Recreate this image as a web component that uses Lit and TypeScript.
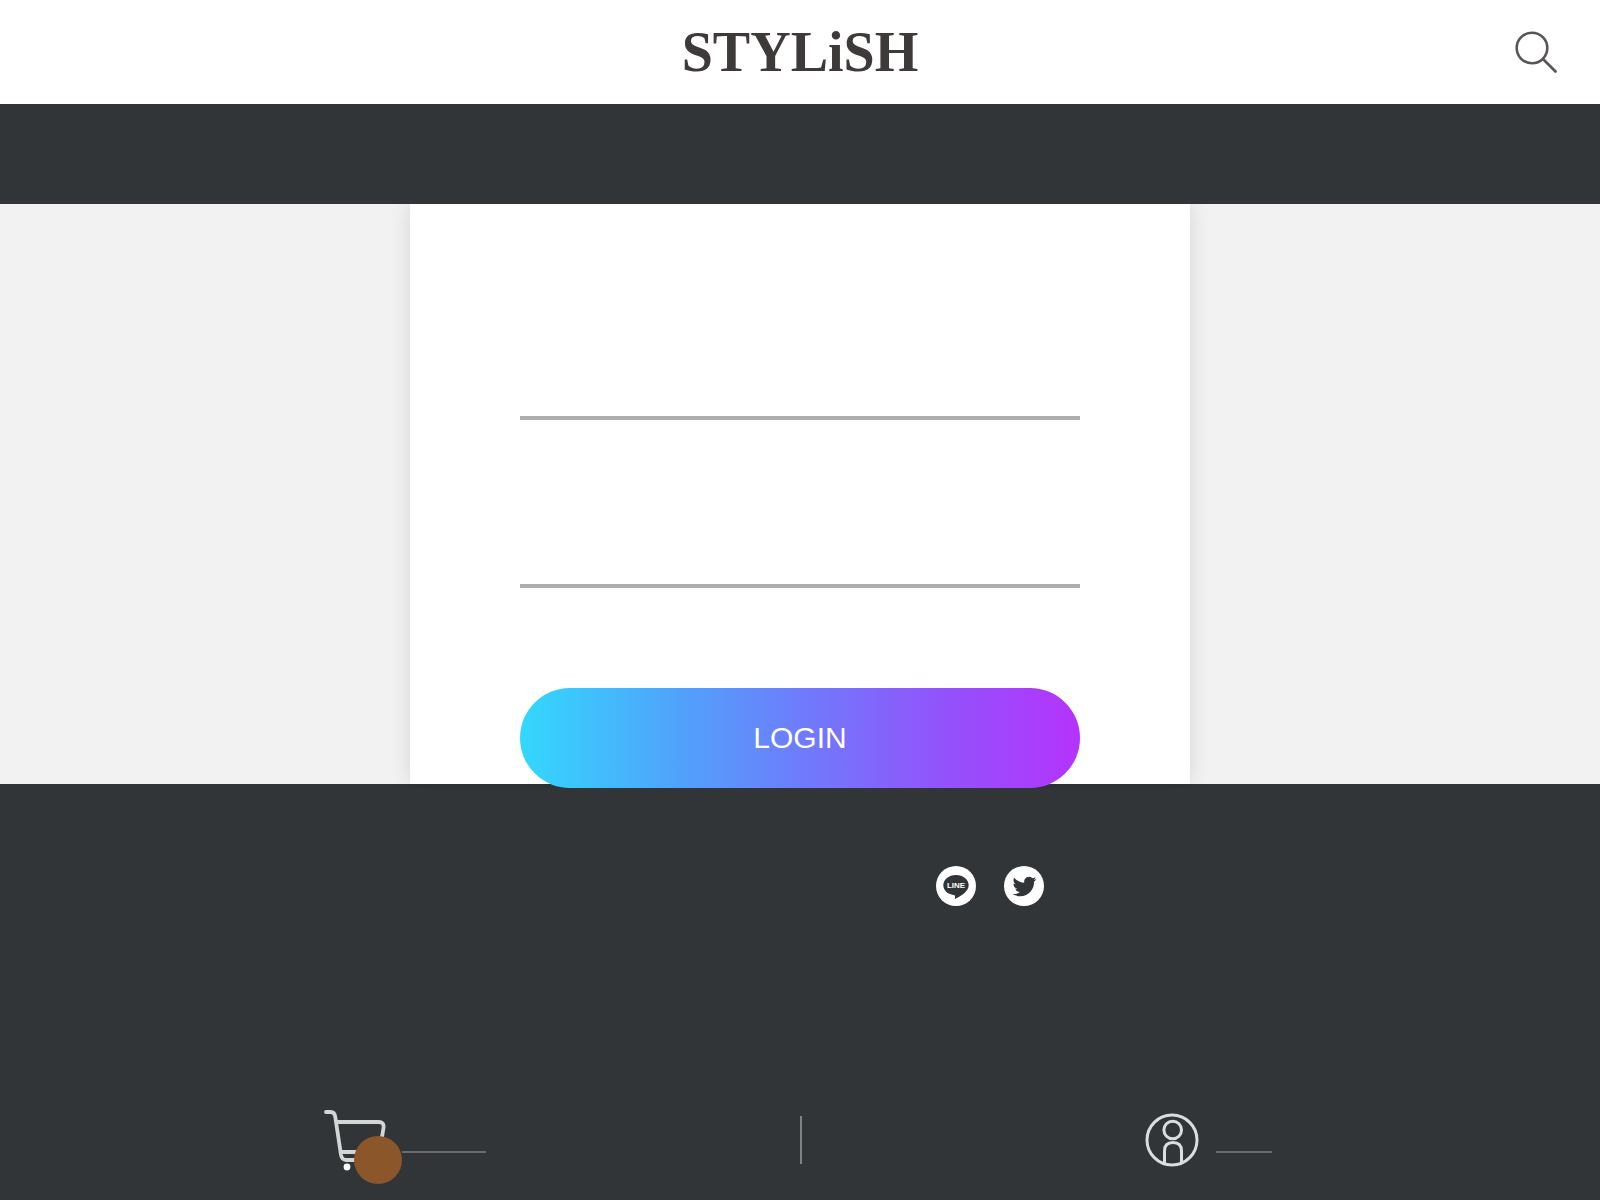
import { LitElement, html, css } from "lit";
import { customElement } from "lit/decorators.js";

@customElement("app-root")
export class AppRoot extends LitElement {
  static styles = css`
    :host {
      display: flex;
      flex-direction: column;
      min-height: 100vh;
      background: #f2f2f2;
      font-family: "Liberation Sans", Arial, sans-serif;
    }
    * {
      box-sizing: border-box;
    }
    svg {
      display: block;
    }
    .header {
      display: grid;
      grid-template-columns: 1fr auto 1fr;
      align-items: center;
      height: 104px;
      padding: 0 40px;
      background: #fff;
    }
    .logo {
      grid-column: 2;
      color: #3f3a3a;
      font-family: "Liberation Serif", "Times New Roman", serif;
      font-size: 56px;
      font-weight: 700;
      line-height: 64px;
      text-decoration: none;
    }
    .search {
      justify-self: end;
      width: 48px;
      height: 48px;
      padding: 0;
      border: 0;
      background: none;
    }
    .band {
      height: 100px;
      background: #313538;
    }
    .main {
      position: relative;
      z-index: 1;
      flex: 1;
      display: flex;
      justify-content: center;
    }
    /* The side shadows stay; the button may hang over the footer. */
    .card {
      display: flex;
      flex-direction: column;
      width: 780px;
      max-width: 100%;
      height: 580px;
      padding: 116px 110px 0;
      background: #fff;
      box-shadow: 0 0 20px rgba(0, 0, 0, 0.12);
      clip-path: inset(0 -60px -4px);
    }
    .field {
      flex: none;
      height: 100px;
      margin-bottom: 68px;
      padding: 0 8px;
      border: 0;
      border-bottom: 4px solid #adadad;
      background: none;
      font: inherit;
      font-size: 30px;
      outline: none;
    }
    .login {
      flex: none;
      height: 100px;
      margin-top: 32px;
      border: 0;
      border-radius: 50px;
      background: linear-gradient(90deg, #33d8fd, #4fa3fb 28%, #6e7cfb 50%, #9352fb 76%, #b533fd);
      color: #fff;
      font: inherit;
      font-size: 30px;
    }
    .footer {
      height: 296px;
      background: #313538;
    }
    .social {
      display: flex;
      justify-content: center;
      gap: 28px;
      padding: 82px 0 0 380px;
    }
    .tabs {
      display: flex;
      align-items: center;
      height: 120px;
      background: #313538;
    }
    .tab {
      display: flex;
      justify-content: center;
      align-items: center;
      width: 50%;
      height: 48px;
    }
    .tab + .tab {
      box-shadow: inset 2px 0 #828282;
    }
    .icon {
      position: relative;
      flex: none;
      width: 88px;
      height: 88px;
    }
    .badge {
      position: absolute;
      right: 0;
      bottom: 0;
      width: 48px;
      height: 48px;
      border-radius: 50%;
      background: #8b572a;
    }
    .underline {
      height: 26px;
      border-bottom: 2px solid #6b6b6b;
    }
    .wide {
      width: 84px;
    }
    .narrow {
      width: 56px;
    }
  `;

  render() {
    return html`
      <header class="header">
        <a class="logo" href="#">STYLiSH</a>
        <button class="search" aria-label="Search">
          <svg width="48" height="48" viewBox="0 0 48 48" fill="none" stroke="#5a5555" stroke-linecap="round">
            <circle cx="20" cy="20" r="15.3" stroke-width="2.6" />
            <path d="M31 31L43.5 43.5" stroke-width="2.8" />
          </svg>
        </button>
      </header>
      <nav class="band"></nav>
      <main class="main">
        <form class="card">
          <input class="field" type="email" aria-label="Email" />
          <input class="field" type="password" aria-label="Password" />
          <button class="login" type="button">LOGIN</button>
        </form>
      </main>
      <footer class="footer">
        <div class="social">
          <a href="#" aria-label="Line">
            <svg width="40" height="40" viewBox="0 0 40 40">
              <circle cx="20" cy="20" r="20" fill="#fff" />
              <path
                d="M20 9C12.9 9 7.3 13.5 7.3 19.3C7.3 24.3 11.7 28.3 17.5 29C19.2 29.3 19.3 30 18.9 33C24 31 32.7 25.5 32.7 19.3C32.7 13.5 27.1 9 20 9Z"
                fill="#313538"
              />
              <text x="20" y="22" text-anchor="middle" font-family="Liberation Sans, sans-serif" font-size="8" font-weight="700" fill="#fff">LINE</text>
            </svg>
          </a>
          <a href="#" aria-label="Twitter">
            <svg width="40" height="40" viewBox="0 0 40 40">
              <circle cx="20" cy="20" r="20" fill="#fff" />
              <path
                transform="translate(8.5 8.5)"
                d="M23.953 4.57a10 10 0 01-2.825.775 4.958 4.958 0 002.163-2.723c-.951.555-2.005.959-3.127 1.184a4.92 4.92 0 00-8.384 4.482C7.69 8.095 4.067 6.13 1.64 3.162a4.822 4.822 0 00-.666 2.475c0 1.71.87 3.213 2.188 4.096a4.904 4.904 0 01-2.228-.616v.06a4.923 4.923 0 003.946 4.827 4.996 4.996 0 01-2.212.085 4.936 4.936 0 004.604 3.417 9.867 9.867 0 01-6.102 2.105c-.39 0-.779-.023-1.17-.067a13.995 13.995 0 007.557 2.209c9.053 0 13.998-7.496 13.998-13.985 0-.21 0-.42-.015-.63A9.935 9.935 0 0024 4.59z"
                fill="#313538"
              />
            </svg>
          </a>
        </div>
      </footer>
      <nav class="tabs">
        <a class="tab" href="#" aria-label="Cart">
          <span class="icon">
            <svg width="88" height="88" viewBox="0 0 88 88" fill="none" stroke="#d4d6d6" stroke-width="3.8" stroke-linecap="round" stroke-linejoin="round">
              <path d="M12 16H16.5Q20.5 16 21.2 20.5L27 59Q28 64 32 64H62M22.5 26H64.5Q70.5 26 69.500 32L65.5 56H27" />
              <circle cx="33" cy="71" r="3.4" fill="#fff" stroke="none" />
            </svg>
            <span class="badge"></span>
          </span>
          <span class="underline wide"></span>
        </a>
        <a class="tab" href="#" aria-label="Member">
          <span class="icon">
            <svg width="88" height="88" viewBox="0 0 88 88" fill="none" stroke="#dcdddd" stroke-width="3">
              <circle cx="44" cy="44" r="25" />
              <circle cx="44.7" cy="34" r="8.8" />
              <path d="M36.5 67V55Q36.5 46.5 45 46.5Q53.5 46.5 53.5 55V67" />
            </svg>
          </span>
          <span class="underline narrow"></span>
        </a>
      </nav>
    `;
  }
}
